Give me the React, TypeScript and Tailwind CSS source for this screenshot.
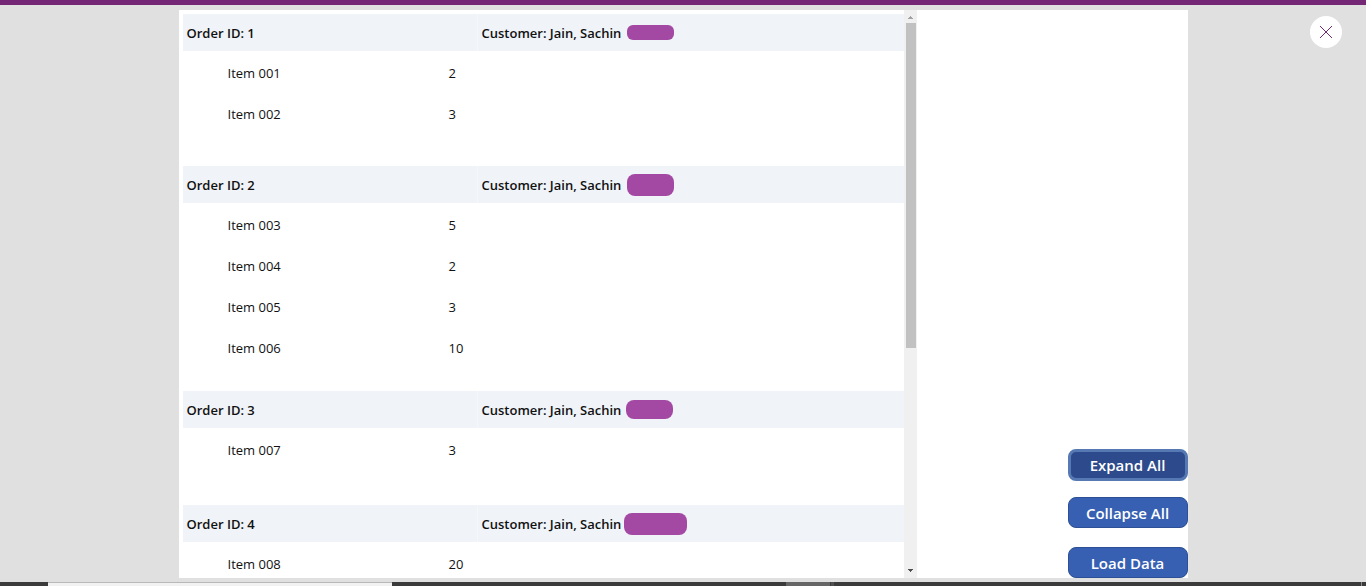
interface OrderItem {
  name: string;
  quantity: number;
}

interface Order {
  id: number;
  customer: string;
  redaction: string; // size and gap of the block over the rest of the name
  spacing: string;
  items: OrderItem[];
}

const orders: Order[] = [
  {
    id: 1,
    customer: "Jain, Sachin",
    redaction: "ml-[6px] h-[15px] w-[47px] rounded-md",
    spacing: "pb-[33px]",
    items: [
      { name: "Item 001", quantity: 2 },
      { name: "Item 002", quantity: 3 }
    ]
  },
  {
    id: 2,
    customer: "Jain, Sachin",
    redaction: "ml-[6px] h-[22px] w-[47px] rounded-lg",
    spacing: "pb-6",
    items: [
      { name: "Item 003", quantity: 5 },
      { name: "Item 004", quantity: 2 },
      { name: "Item 005", quantity: 3 },
      { name: "Item 006", quantity: 10 }
    ]
  },
  {
    id: 3,
    customer: "Jain, Sachin",
    redaction: "ml-[5px] h-[19px] w-[47px] rounded-lg",
    spacing: "pb-9",
    items: [{ name: "Item 007", quantity: 3 }]
  },
  {
    id: 4,
    customer: "Jain, Sachin",
    redaction: "ml-[3px] h-[22px] w-[63px] rounded-lg",
    spacing: "",
    items: [{ name: "Item 008", quantity: 20 }]
  }
];

function OrderGroup({ order }: { order: Order }) {
  return (
    <section className={order.spacing}>
      <div className="flex h-[37px] items-center bg-[#f0f3f8] font-semibold">
        <h2 className="flex w-[295px] shrink-0 items-center self-stretch border-r border-[#f5f7fb] pl-1">
          Order ID: {order.id}
        </h2>
        <p className="pl-1 whitespace-nowrap">Customer: {order.customer}</p>
        <span className={`shrink-0 bg-[#a349a4] ${order.redaction}`} />
      </div>
      <table className="w-full table-fixed" aria-label={`Items of order ${order.id}`}>
        <tbody>
          {order.items.map((item) => (
            <tr key={item.name} className="h-[41px]">
              <td className="w-[266px] pt-0.5 pl-[45px]">{item.name}</td>
              <td className="pt-0.5">{item.quantity}</td>
            </tr>
          ))}
        </tbody>
      </table>
    </section>
  );
}

function ScrollTrack() {
  return (
    <div className="flex w-[13px] shrink-0 flex-col bg-[#f0f0f0]">
      <svg className="h-[13px] w-[13px] shrink-0" viewBox="0 0 13 13" shapeRendering="crispEdges">
        <path d="M6 6h1v1h1v1h1v1H4V8h1V7h1z" fill="#a3a3a3" />
      </svg>
      {/* Thumb and the free part of the track */}
      <div className="mr-px ml-0.5 flex-[325] bg-[#c1c1c1]" />
      <div className="flex-[217]" />
      <svg className="h-[13px] w-[13px] shrink-0" viewBox="0 0 13 13" shapeRendering="crispEdges">
        <path d="M4 4h5v1H8v1H7v1H6V6H5V5H4z" fill="#505050" />
      </svg>
    </div>
  );
}

export default function App() {
  return (
    <div className="relative flex h-screen flex-col overflow-hidden bg-[#e0e0e0] font-['Open_Sans',sans-serif] text-[13px] leading-5 text-[#111111]">
      <div className="h-[5px] shrink-0 bg-[#742774]" />

      <main className="mx-auto mt-[5px] mb-1 flex min-h-0 w-full max-w-[1009px] flex-1 bg-white">
        <div className="min-w-0 flex-[721] overflow-hidden pt-1 pl-1">
          {orders.map((order) => (
            <OrderGroup key={order.id} order={order} />
          ))}
        </div>
        <ScrollTrack />

        <div className="flex flex-[271] flex-col items-end justify-end text-[15px] font-semibold text-white">
          <button
            type="button"
            className="h-8 w-[120px] rounded-lg border-[3px] border-[#5678b3] bg-[#2d4b8c] leading-5"
          >
            Expand All
          </button>
          <button
            type="button"
            className="mt-4 h-[31px] w-[120px] rounded-lg border border-[#2d4f96] bg-[#3860b2] leading-5"
          >
            Collapse All
          </button>
          <button
            type="button"
            className="mt-[19px] h-[31px] w-[120px] rounded-lg border border-[#2d4f96] bg-[#3860b2] leading-5"
          >
            Load Data
          </button>
        </div>
      </main>

      {/* Top edge of the desktop taskbar */}
      <div className="flex h-1 shrink-0 bg-[#3b3b3b]">
        <div className="ml-12 w-[344px] border-t border-[#b8b8b8] bg-[#f2f2f2]" />
        <div className="ml-[394px] w-11 bg-[#666666]" />
        <div className="ml-px w-[3px] bg-[#505050]" />
        <div className="mr-1 ml-auto w-px bg-[#8a8a8a]" />
      </div>

      <button
        type="button"
        aria-label="Close"
        className="absolute top-4 right-6 flex size-8 items-center justify-center rounded-full bg-white"
      >
        <svg className="size-3" viewBox="0 0 12 12" fill="none" stroke="#742774">
          <path d="M0 0l12 12M12 0L0 12" />
        </svg>
      </button>
    </div>
  );
}
